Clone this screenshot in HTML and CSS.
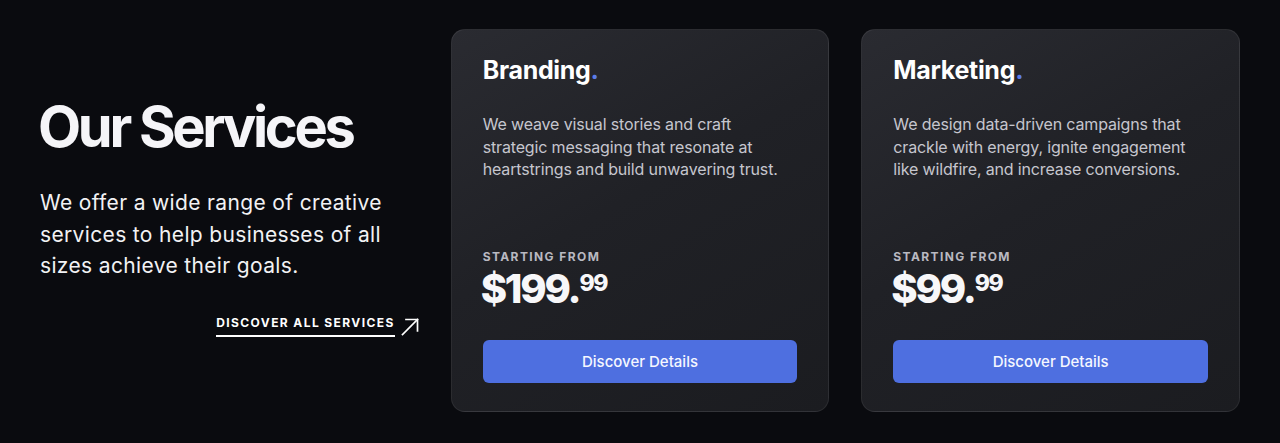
FILE: index.html
```html
<!DOCTYPE html>
<html lang="en">
<head>
<meta charset="utf-8">
<title>Our Services</title>
<link rel="stylesheet" href="styles.css">
</head>
<body>
<section class="services">
  <div class="intro">
    <h1 class="intro-title">Our Services</h1>
    <p class="intro-text">We offer a wide range of creative services to help businesses of all sizes achieve their goals.</p>
    <a class="intro-link" href="#">
      <span class="intro-link-text">DISCOVER ALL SERVICES</span>
      <svg class="intro-link-icon" width="18" height="18" viewBox="0 0 18 18" fill="none" stroke="#ffffff" stroke-width="1.7" stroke-linecap="square">
        <path d="M1.5 16.5 L16.5 1.5"/>
        <path d="M5 1.5 H16.5 V13"/>
      </svg>
    </a>
  </div>

  <article class="card">
    <h2 class="card-title">Branding<span class="dot">.</span></h2>
    <p class="card-text">We weave visual stories and craft strategic messaging that resonate at heartstrings and build unwavering trust.</p>
    <div class="card-spacer"></div>
    <div class="card-label">STARTING FROM</div>
    <div class="card-price">$199.<sup class="cents">99</sup></div>
    <a class="card-button" href="#">Discover Details</a>
  </article>

  <article class="card">
    <h2 class="card-title">Marketing<span class="dot">.</span></h2>
    <p class="card-text">We design data-driven campaigns that crackle with energy, ignite engagement like wildfire, and increase conversions.</p>
    <div class="card-spacer"></div>
    <div class="card-label">STARTING FROM</div>
    <div class="card-price">$99.<sup class="cents">99</sup></div>
    <a class="card-button" href="#">Discover Details</a>
  </article>
</section>
</body>
</html>
```

FILE: styles.css
```css
* { box-sizing: border-box; }

html, body {
  margin: 0;
  padding: 0;
  background: #0a0b0f;
  font-family: Inter, "Noto Sans", "Liberation Sans", sans-serif;
  color: #f4f4f6;
}

.services {
  display: grid;
  grid-template-columns: repeat(3, 1fr);
  column-gap: 32px;
  padding: 29px 40px 31px;
  height: 443px;
}

.intro {
  display: flex;
  flex-direction: column;
  padding-top: 68px;
}

.intro-title {
  margin: 0;
  margin-left: -2px;
  font-size: 56px;
  line-height: 60px;
  font-weight: 700;
  letter-spacing: -3.3px;
  color: #f5f5f8;
}

.intro-text {
  margin: 30px 0 0;
  max-width: 350px;
  font-size: 21px;
  line-height: 31.5px;
  font-weight: 400;
  letter-spacing: 0.35px;
  color: #f2f2f4;
}

.intro-link {
  align-self: flex-end;
  display: flex;
  align-items: flex-start;
  gap: 6px;
  margin-top: 33px;
  text-decoration: none;
  color: #ffffff;
}

.intro-link-text {
  font-size: 12px;
  line-height: 16px;
  font-weight: 700;
  letter-spacing: 1.4px;
  padding-bottom: 4px;
  border-bottom: 2px solid #ffffff;
}

.intro-link-icon {
  display: block;
  margin-top: 3px;
}

.card {
  display: flex;
  flex-direction: column;
  padding: 26px 31px 28px;
  border: 1px solid rgba(255, 255, 255, 0.07);
  border-radius: 14px;
  background: linear-gradient(150deg, #2a2b31 0%, #202126 45%, #1b1c20 100%);
}

.card-title {
  margin: 0;
  font-size: 25px;
  line-height: 29px;
  font-weight: 700;
  letter-spacing: -0.3px;
  color: #ffffff;
}

.dot { color: #5b7ce8; }

.card-text {
  margin: 28px 0 0;
  font-size: 16px;
  line-height: 22.5px;
  letter-spacing: -0.15px;
  color: #c6c6ce;
}

.card-spacer { flex: 1; }

.card-label {
  font-size: 12px;
  line-height: 16px;
  font-weight: 700;
  letter-spacing: 1.4px;
  color: #b9b9c1;
}

.card-price {
  margin-top: 2px;
  margin-left: -2px;
  font-size: 40px;
  line-height: 44px;
  font-weight: 800;
  letter-spacing: -2.2px;
  color: #f7f7f9;
}

.cents {
  font-size: 23px;
  letter-spacing: -1.5px;
  vertical-align: 12px;
  line-height: 0;
  margin-left: 0;
}

.card-button {
  display: flex;
  align-items: center;
  justify-content: center;
  margin-top: 29px;
  height: 43px;
  border-radius: 6px;
  background: #4e6fe0;
  color: #f5f7ff;
  font-size: 15px;
  font-weight: 500;
  text-decoration: none;
}
```
